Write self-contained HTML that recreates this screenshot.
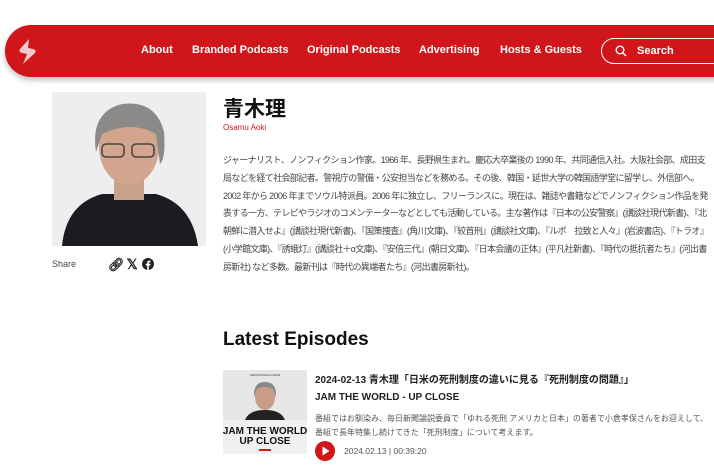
<!DOCTYPE html>
<html><head><meta charset="utf-8"><style>
*{margin:0;padding:0;box-sizing:border-box}
body{width:714px;height:476px;overflow:hidden;background:#fff;font-family:"Liberation Sans","Noto Sans CJK JP",sans-serif;color:#222;position:relative}
.nav{position:absolute;left:5px;top:25px;width:760px;height:52px;background:#d0161b;border-radius:26px;box-shadow:0 3px 6px rgba(0,0,0,.25)}
.nav a{position:absolute;top:19px;color:#fff;font-weight:bold;font-size:11px;text-decoration:none}
.search{position:absolute;left:596px;top:13px;width:140px;height:26px;border:1.5px solid #fff;border-radius:13px;color:#fff;font-size:11px;font-weight:bold;padding:6px 0 0 35px}
.abs{position:absolute}
.bio{position:absolute;left:223px;top:152px;width:488px;font-size:9px;line-height:17.8px;color:#444;letter-spacing:-0.65px}
</style></head><body>
<div class="nav">
<svg class="abs" style="left:10px;top:12px" width="26" height="30" viewBox="0 0 26 30"><path d="M14 2 L5 12 Q3 15 7 16 L12 17 L8 27 L20 16 Q22 13 18 12 L13 11 Z" fill="#f3c9ca"/></svg>
<a style="left:136px">About</a>
<a style="left:187px">Branded Podcasts</a>
<a style="left:302px">Original Podcasts</a>
<a style="left:414px">Advertising</a>
<a style="left:495px">Hosts &amp; Guests</a>
<div class="search">Search
<svg class="abs" style="left:13px;top:6px" width="12" height="12" viewBox="0 0 12 12"><circle cx="5" cy="5" r="3.8" fill="none" stroke="#fff" stroke-width="1.4"/><path d="M8 8 L11 11" stroke="#fff" stroke-width="1.4"/></svg></div>
</div>
<svg class="abs" style="left:52px;top:92px" width="154" height="154" viewBox="0 0 154 154">
<rect width="154" height="154" fill="#eeeeee"/>
<path d="M10 154 Q14 112 50 102 L104 102 Q140 112 146 154Z" fill="#1b1c22"/>
<rect x="62" y="80" width="30" height="28" fill="#c9a089"/>
<ellipse cx="77" cy="55" rx="30" ry="38" fill="#d1a58e"/>
<path d="M44 60 Q38 20 70 12 Q104 8 112 40 Q114 66 108 72 L104 42 Q80 28 50 42 Z" fill="#8c8a88"/>
<rect x="50" y="52" width="22" height="13" rx="4" fill="none" stroke="#444" stroke-width="1.5"/>
<rect x="80" y="52" width="22" height="13" rx="4" fill="none" stroke="#444" stroke-width="1.5"/>
</svg>
<div class="abs" style="left:223px;top:93px;font-size:21px;font-weight:bold;color:#111">青木理</div>
<div class="abs" style="left:223px;top:123px;font-size:8px;color:#d0161b">Osamu Aoki</div>
<div class="bio">ジャーナリスト、ノンフィクション作家。1966 年、長野県生まれ。慶応大卒業後の 1990 年、共同通信入社。大阪社会部、成田支局などを経て社会部記者。警視庁の警備・公安担当などを務める。その後、韓国・延世大学の韓国語学堂に留学し、外信部へ。2002 年から 2006 年までソウル特派員。2006 年に独立し、フリーランスに。現在は、雑誌や書籍などでノンフィクション作品を発表する一方、テレビやラジオのコメンテーターなどとしても活動している。主な著作は『日本の公安警察』(講談社現代新書)、『北朝鮮に潜入せよ』(講談社現代新書)、『国策捜査』(角川文庫)、『絞首刑』(講談社文庫)、『ルポ　拉致と人々』(岩波書店)、『トラオ』(小学館文庫)、『誘蛾灯』(講談社＋α文庫)、『安倍三代』(朝日文庫)、『日本会議の正体』(平凡社新書)、『時代の抵抗者たち』(河出書房新社) など多数。最新刊は『時代の異端者たち』(河出書房新社)。</div>
<div class="abs" style="left:52px;top:259px;font-size:9px;color:#444">Share</div>
<div class="abs" style="left:108px;top:256px;font-size:13px;font-weight:bold;color:#222;letter-spacing:2px">🔗︎<span style="font-size:14px">𝕏</span></div>
<svg class="abs" style="left:142px;top:258px" width="12" height="12" viewBox="0 0 12 12"><circle cx="6" cy="6" r="6" fill="#222"/><path d="M6.8 12V7.5H8.3L8.5 5.8H6.8V4.8Q6.8 4.2 7.4 4.2H8.5V2.7Q7.8 2.6 7.1 2.6Q5.2 2.6 5.2 4.6V5.8H3.8V7.5H5.2V12Z" fill="#fff"/></svg>
<div class="abs" style="left:223px;top:329px;font-size:19px;font-weight:bold;color:#111">Latest Episodes</div>
<svg class="abs" style="left:223px;top:370px" width="84" height="84" viewBox="0 0 84 84">
<rect width="84" height="84" fill="#e6e6e6"/>
<path d="M22 50 Q26 40 42 40 Q58 40 62 50Z" fill="#222"/>
<ellipse cx="42" cy="27" rx="10" ry="13" fill="#c99d88"/>
<path d="M31 27 Q30 12 42 12 Q54 12 53 27 L50 19 Q42 15 34 19Z" fill="#888"/>
<rect x="0" y="50" width="84" height="34" fill="#f0f0f0"/>
<text x="42" y="64" font-size="10" font-weight="bold" text-anchor="middle" font-family="Liberation Sans" fill="#111">JAM THE WORLD</text>
<text x="42" y="74" font-size="10" font-weight="bold" text-anchor="middle" font-family="Liberation Sans" fill="#111">UP CLOSE</text>
<text x="42" y="6" font-size="3" text-anchor="middle" fill="#333">AMAZON EXCLUSIVE</text>
<rect x="36" y="79" width="12" height="2" fill="#d0161b"/>
</svg>
<div class="abs" style="left:315px;top:371px;font-size:10px;font-weight:bold;color:#222">2024-02-13 青木理「日米の死刑制度の違いに見る『死刑制度の問題』」</div>
<div class="abs" style="left:315px;top:392px;font-size:10px;font-weight:bold;color:#222">JAM THE WORLD - UP CLOSE</div>
<div class="abs" style="left:315px;top:412px;width:395px;font-size:8px;line-height:14px;color:#555">番組ではお馴染み、毎日新聞論説委員で「ゆれる死刑 アメリカと日本」の著者で小倉孝保さんをお迎えして、番組で長年特集し続けてきた「死刑制度」について考えます。</div>
<svg class="abs" style="left:315px;top:441px" width="20" height="20" viewBox="0 0 20 20"><circle cx="10" cy="10" r="10" fill="#d0161b"/><path d="M7.5 5.5 L14.5 10 L7.5 14.5Z" fill="#fff"/></svg>
<div class="abs" style="left:344px;top:446px;font-size:8.5px;color:#555">2024.02.13 | 00:39:20</div>
</body></html>
